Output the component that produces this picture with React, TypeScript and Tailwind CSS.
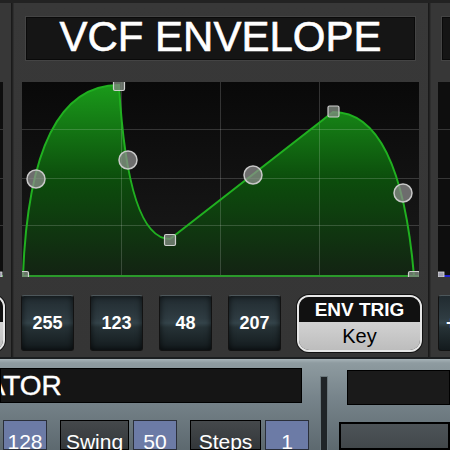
const rows = [47, 96, 143];
const cols = [99, 198, 297];

const boxBg =
  "bg-[linear-gradient(to_bottom,#212b30_0%,#2f3c42_42%,#34444a_50%,#263236_58%,#131a1d_100%)]";

const NumBox = ({ value }: { value: string }) => (
  <div
    className={`flex h-[56px] w-[53px] shrink-0 items-center justify-center rounded-[3px] border border-[#121212] border-t-[#4d575b] ${boxBg} text-[18px] font-bold text-white shadow-[inset_0_0_6px_rgba(0,0,0,0.7)]`}
  >
    {value}
  </div>
);

const Toggle = ({ top, bottom, className = "" }: { top: string; bottom: string; className?: string }) => (
  <div className={`flex h-[57px] shrink-0 flex-col overflow-hidden rounded-[12px] border-2 border-[#e6e6e6] shadow-[0_0_0_1px_#111] ${className}`}>
    <div className="flex h-[25px] items-center justify-center bg-[#111] text-[19px] font-bold leading-none text-white">{top}</div>
    <div className="flex flex-1 items-center justify-center bg-[linear-gradient(to_bottom,#d2d2d2,#bdbdbd)] text-[20px] leading-none text-black">
      {bottom}
    </div>
  </div>
);

const Grid = () => (
  <>
    {rows.map((y) => (
      <line key={`r${y}`} x1={0} x2={400} y1={y + 0.5} y2={y + 0.5} stroke="rgba(255,255,255,0.17)" strokeWidth={1} />
    ))}
    {cols.map((x) => (
      <line key={`c${x}`} x1={x + 0.5} x2={x + 0.5} y1={0} y2={195} stroke="rgba(255,255,255,0.17)" strokeWidth={1} />
    ))}
  </>
);

const Envelope = () => {
  const curve = "M1 194 Q8 3 97 3 Q106 157 148 157 L311 30 Q378 30 392 194";
  const circles = [
    [14, 97],
    [106, 78],
    [231, 93],
    [381, 111],
  ];
  const squares = [
    [1, 195],
    [97, 3],
    [148, 158],
    [311.5, 29.5],
    [392, 195],
  ];
  return (
    <svg width="397" height="195" viewBox="0 0 397 195" className="block">
      <defs>
        <linearGradient id="bg" x1="0" y1="0" x2="0" y2="1">
          <stop offset="0" stopColor="#090909" />
          <stop offset="1" stopColor="#1a1a1a" />
        </linearGradient>
        <linearGradient id="fill" x1="0" y1="0" x2="0" y2="1">
          <stop offset="0" stopColor="#1a9a1a" />
          <stop offset="0.5" stopColor="#0c4c0c" />
          <stop offset="1" stopColor="#132313" />
        </linearGradient>
      </defs>
      <rect width="397" height="195" fill="url(#bg)" />
      <path d={`${curve} Z`} fill="url(#fill)" />
      <Grid />
      <path d={curve} fill="none" stroke="#20b020" strokeWidth={2} />
      <line x1={0} x2={397} y1={194} y2={194} stroke="#2a9a2a" strokeWidth={2} />
      {circles.map(([x, y]) => (
        <circle key={`${x}`} cx={x} cy={y} r={9} fill="rgba(140,140,140,0.75)" stroke="#c8c8c8" strokeWidth={1.5} />
      ))}
      {squares.map(([x, y]) => (
        <rect
          key={`${x}`}
          x={x - 5.5}
          y={y - 5.5}
          width={11}
          height={11}
          rx={1.5}
          fill="rgba(125,135,125,0.8)"
          stroke="#d0d0d0"
          strokeWidth={1.2}
        />
      ))}
    </svg>
  );
};

const SideGraph = ({ color, square }: { color: string; square: string }) => (
  <svg width="60" height="195" viewBox="0 0 60 195" className="block">
    <rect width="60" height="195" fill="#0e0e0e" />
    {rows.map((y) => (
      <line key={y} x1={0} x2={60} y1={y + 0.5} y2={y + 0.5} stroke="rgba(255,255,255,0.17)" />
    ))}
    <line x1={0} x2={60} y1={194} y2={194} stroke={color} strokeWidth={2} />
    <rect x={square === "l" ? 53 : 0} y={190} width={6} height={5} fill="#a0a0b0" stroke="#ddd" strokeWidth={0.8} />
  </svg>
);

const Title = ({ text, className = "" }: { text: string; className?: string }) => (
  <div
    className={`flex h-[43px] shrink-0 items-center justify-center border border-[#0a0a0a] bg-[#151515] text-[42px] leading-none text-white [-webkit-text-stroke:0.6px_white] shadow-[0_0_0_1px_#444] ${className}`}
  >
    <span className="mt-[-3px]">{text}</span>
  </div>
);

const Pair = ({ label, value, labelClass = "" }: { label: string; value: string; labelClass?: string }) => (
  <div className="flex gap-[4px]">
    <div
      className={`flex h-[30px] items-start justify-center border border-black bg-[linear-gradient(to_bottom,#45494c,#33373a)] pt-[10px] text-[21px] leading-none text-white ${labelClass}`}
    >
      {label}
    </div>
    <div className="flex h-[30px] w-[44px] items-start justify-center border border-[#2a2f3a] bg-[#6c7ba6] pt-[10px] text-[21px] leading-none text-white">
      {value}
    </div>
  </div>
);

export default function App() {
  return (
    <div className="h-[450px] w-[450px] overflow-hidden bg-[#2b2b2b] font-['Liberation_Sans',Arial,sans-serif]">
      <div className="h-[3px] bg-[#222] shadow-[0_1px_0_#4a4a4a]" />
      <div className="flex h-[354px]">
        {/* left panel edge */}
        <div className="flex w-[11px] shrink-0 flex-col overflow-hidden bg-[#373737]">
          <div className="ml-[-57px] mt-[79px]">
            <SideGraph color="#2a9a2a" square="l" />
          </div>
          <Toggle top="ENV" bottom="On" className="ml-[-120px] mt-[18px] w-[125px]" />
        </div>
        <div className="w-[3px] shrink-0 bg-[#222] shadow-[inset_1px_0_0_#1a1a1a,inset_-1px_0_0_#2e2e2e]" />

        {/* main panel */}
        <div className="flex w-[414px] shrink-0 flex-col bg-[linear-gradient(to_bottom,#383838,#353535)]">
          <Title text="VCF ENVELOPE" className="ml-[12px] mt-[14px] w-[389px]" />
          <div className="ml-[8px] mt-[22px]">
            <Envelope />
          </div>
          <div className="ml-[7px] mt-[18px] flex gap-[16px]">
            <NumBox value="255" />
            <NumBox value="123" />
            <NumBox value="48" />
            <NumBox value="207" />
            <Toggle top="ENV TRIG" bottom="Key" className="w-[125px]" />
          </div>
        </div>
        <div className="w-[3px] shrink-0 bg-[#222] shadow-[inset_1px_0_0_#1a1a1a,inset_-1px_0_0_#2e2e2e]" />

        {/* right panel edge */}
        <div className="flex flex-1 flex-col overflow-hidden bg-[#373737]">
          <Title text="" className="ml-[11px] mt-[14px] w-[300px]" />
          <div className="ml-[7px] mt-[22px]">
            <SideGraph color="#2020d0" square="r" />
          </div>
          <div className="ml-[7px] mt-[18px] flex">
            <div
              className={`flex h-[56px] w-[53px] shrink-0 items-center justify-start rounded-[3px] border border-[#121212] border-t-[#4d575b] ${boxBg} pl-[7px] text-[18px] font-bold text-white`}
            >
              +1
            </div>
          </div>
        </div>
      </div>

      {/* lower panel */}
      <div className="h-[2px] bg-[#1b1e20]" />
      <div className="flex h-[91px] bg-[linear-gradient(to_bottom,#a7b3b8_0px,#8e9ba0_4px,#76838a_40px,#5d696f_100%)]">
        <div className="flex w-[308px] shrink-0 flex-col">
          <div className="mt-[9px] flex h-[40px] w-[302px] items-center overflow-hidden border border-black bg-[#151515] text-[28px] leading-none text-white [-webkit-text-stroke:0.4px_white]">
            <span className="ml-[-142px] whitespace-nowrap">ARPEGGIATOR</span>
          </div>
          <div className="ml-[-75px] mt-[17px] flex gap-[13px]">
            <Pair label="Tempo" value="128" labelClass="w-[74px]" />
            <Pair label="Swing" value="50" labelClass="w-[69px]" />
            <Pair label="Steps" value="1" labelClass="w-[71px]" />
          </div>
        </div>
        <div className="ml-[13px] mt-[18px] w-[6px] shrink-0 bg-[#1f2427] shadow-[0_0_0_1px_#6a777c]" />
        <div className="flex flex-1 flex-col">
          <div className="ml-[20px] mt-[11px] h-[37px] border border-black bg-[#1a1a1a]" />
          <div className="ml-[12px] mt-[17px] h-[30px] border-2 border-black bg-[linear-gradient(to_bottom,#4d5458,#42484b)]" />
        </div>
      </div>
    </div>
  );
}
